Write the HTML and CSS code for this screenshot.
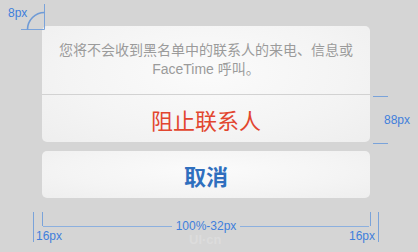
FILE: index.html
```html
<!DOCTYPE html>
<html lang="zh-CN">
<head>
  <meta charset="UTF-8" />
  <title>Action Sheet</title>
  <link rel="stylesheet" href="styles.css">
</head>
<body>
  <div class="sheet">
    <div class="group">
      <p class="message">您将不会收到黑名单中的联系人的来电、信息或<br>FaceTime 呼叫。</p>
      <div class="action action-danger">阻止联系人</div>
    </div>
    <div class="group">
      <div class="action action-cancel">取消</div>
    </div>
  </div>

  <!-- spec annotations -->
  <div class="note note-radius">
    <span class="note-label">8px</span>
    <svg class="radius-arc" width="26" height="28" viewBox="0 0 26 28">
      <path d="M0 25.5 H23.5 V0" fill="none" stroke="#7aa3da" stroke-width="1"/>
      <path d="M6.5 25.5 A17 17 0 0 1 23.5 8.5" fill="none" stroke="#6f9bd6" stroke-width="1.6"/>
    </svg>
  </div>

  <div class="note note-height">
    <span class="tick"></span>
    <span class="note-label">88px</span>
    <span class="tick"></span>
  </div>

  <div class="note note-width">
    <span class="edge edge-left"><span class="note-label">16px</span></span>
    <div class="span-line">
      <span class="rule"></span>
      <span class="note-label">100%-32px</span>
      <span class="rule"></span>
    </div>
    <span class="edge edge-right"><span class="note-label">16px</span></span>
  </div>

  <div class="watermark">UI·cn</div>
</body>
</html>
```

FILE: styles.css
```css
body {
  margin: 0;
  height: 252px;
  background: #d5d5d5;
  font-family: "Noto Sans CJK SC", "Liberation Sans", sans-serif;
  overflow: hidden;
}
.sheet {
  padding: 26px 0 0 42px;
  width: 328px;
  display: flex;
  flex-direction: column;
  gap: 9px;
}
.group {
  background: radial-gradient(ellipse at 50% 40%, #fbfbfb 0%, #f4f4f4 60%, #eeeeee 100%);
  border-radius: 5px;
  overflow: hidden;
}
.message {
  margin: 0;
  height: 69px;
  box-sizing: border-box;
  padding-top: 15px;
  border-bottom: 1px solid #d2d2d2;
  text-align: center;
  font-family: "Liberation Sans", "Noto Sans CJK SC", sans-serif;
  font-size: 14px;
  line-height: 19px;
  color: #9b9b9b;
}
.action {
  height: 47px;
  display: flex;
  justify-content: center;
  align-items: center;
  font-size: 22px;
}
.action-danger {
  color: #e2462f;
}
.action-cancel {
  color: #2f6fbe;
  font-weight: bold;
}

/* annotations */
.note {
  position: absolute;
  color: #3f7fdc;
}
.note-label {
  font-family: "Liberation Sans", Arial, sans-serif;
  font-size: 12px;
  line-height: 12px;
}
.note-radius {
  left: 8px;
  top: 4px;
  display: flex;
  align-items: flex-start;
}
.note-radius .note-label {
  margin-top: 3px;
}
.radius-arc {
  margin-left: -6px;
}
.note-height {
  left: 373px;
  top: 96px;
  height: 48px;
  width: 36px;
  display: flex;
  flex-direction: column;
  justify-content: space-between;
}
.note-height .tick {
  display: block;
  width: 15px;
  border-top: 1px solid #7aa3da;
}
.note-height .note-label {
  margin-left: 11px;
}
.note-width {
  left: 33px;
  top: 212px;
  width: 346px;
  display: flex;
}
.edge {
  display: block;
  height: 30px;
  width: 9px;
  border-left: 1px solid #7aa3da;
  position: relative;
}
.edge::after {
  content: "";
  position: absolute;
  top: 0;
  height: 14px;
  border-left: 1px solid #7aa3da;
}
.edge-left::after {
  left: 8px;
}
.edge-left .note-label {
  position: absolute;
  left: 2px;
  top: 18px;
}
.edge-right {
  border-left: none;
  border-right: 1px solid #7aa3da;
}
.edge-right::after {
  right: 7px;
}
.edge-right .note-label {
  position: absolute;
  right: 3px;
  top: 18px;
}
.span-line {
  flex: 1;
  display: flex;
  align-items: center;
  gap: 4px;
  height: 28px;
}
.span-line .rule {
  flex: 1;
  border-top: 1px solid #8cb0df;
}
.watermark {
  position: absolute;
  left: 189px;
  top: 232px;
  font-family: "Liberation Sans", Arial, sans-serif;
  font-size: 13px;
  font-weight: bold;
  color: #e0e0e0;
  opacity: 0.7;
}
```
